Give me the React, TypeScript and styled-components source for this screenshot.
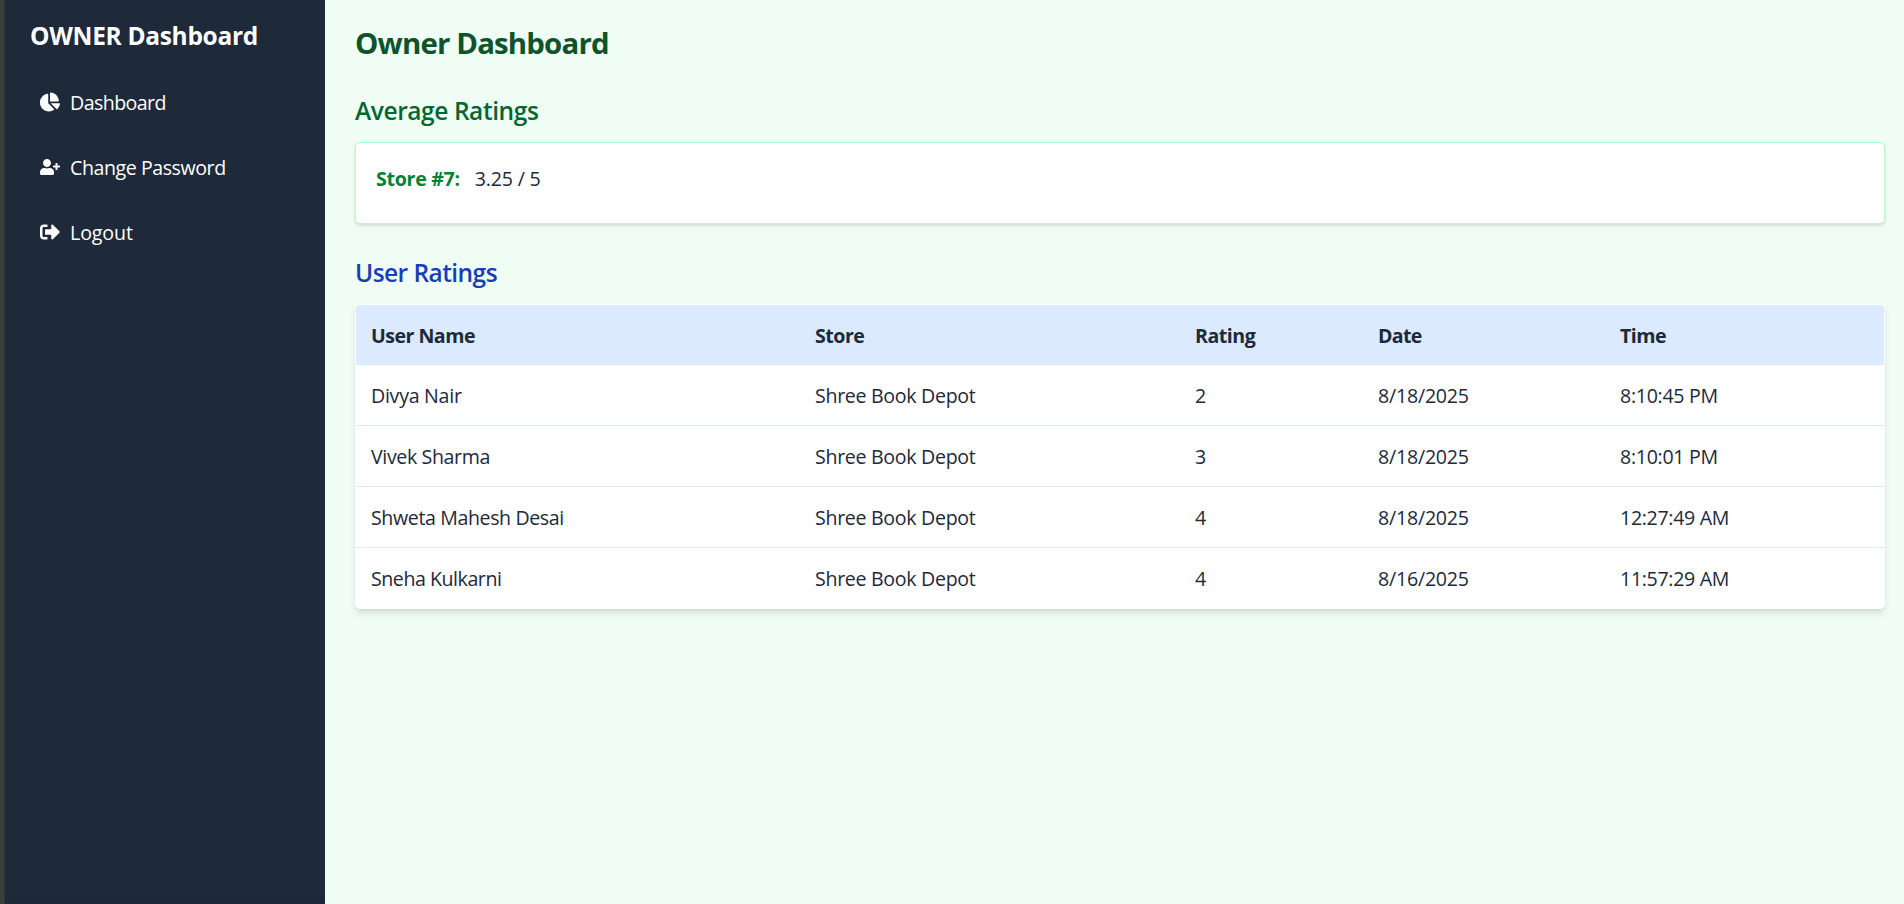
import React from 'react';
import styled, { createGlobalStyle } from 'styled-components';
import { FaChartPie, FaUserPlus, FaSignOutAlt } from 'react-icons/fa';

const GlobalStyle = createGlobalStyle`
  *, *::before, *::after { box-sizing: border-box; }
  body {
    margin: 0;
    background: #f0fdf4;
    color: #1e2939;
    font-family: "Segoe UI", "Open Sans", "Noto Sans", sans-serif;
    font-size: 19.6px;
    line-height: 31px;
    overflow: hidden;
  }
  h1, h2, p { margin: 0; }
`;

const Layout = styled.div`
  display: flex;
  height: 100vh;
  min-height: 904px;
`;

const Edge = styled.div`
  flex: 0 0 5px;
  background: #3c3c3c;
  border-right: 1px solid #343535;
`;

const Sidebar = styled.aside`
  flex: 0 0 320px;
  padding: 18px 25px 0;
  background: #1e2939;
  color: #fff;
  border-bottom: 1px solid #1b2431;
`;

const Text = styled.span<{ $track?: number }>`
  letter-spacing: ${({ $track = 0 }) => $track}px;
  white-space: nowrap;
`;

const Brand = styled.h2`
  margin-bottom: 24px;
  font-size: 24.5px;
  font-weight: 700;
  line-height: 35px;
`;

const Nav = styled.nav`
  display: flex;
  flex-direction: column;
  gap: 15px;
`;

const NavItem = styled.a`
  display: flex;
  align-items: center;
  gap: 10px;
  height: 50px;
  padding: 1px 10px 0;
  color: inherit;
  text-decoration: none;

  svg {
    flex: none;
    width: 20px;
    height: 20px;
    margin-top: -1px;
  }
`;

const Main = styled.main`
  flex: 1;
  padding: 23px 19px 0 30px;
`;

const PageTitle = styled.h1`
  margin-bottom: 30px;
  color: #0d542b;
  font-size: 29.4px;
  font-weight: 700;
  line-height: 40px;
`;

const SectionTitle = styled.h2<{ $color: string }>`
  margin-bottom: 14px;
  color: ${({ $color }) => $color};
  font-size: 24.5px;
  font-weight: 600;
  line-height: 35px;
`;

const RatingCard = styled.div`
  height: 82px;
  margin-bottom: 31px;
  padding: 20px;
  background: #fff;
  border: 1px solid #b9f8cf;
  border-radius: 5px;
  box-shadow: 0 1.25px 3.75px rgba(0, 0, 0, 0.1), 0 1.25px 2.5px -1.25px rgba(0, 0, 0, 0.1);
`;

const StoreLabel = styled(Text)`
  margin-right: 15px;
  color: #008236;
  font-weight: 700;
`;

const TableCard = styled.div`
  background: #fff;
  border: 1px solid #fff;
  border-radius: 5px;
  overflow: hidden;
  box-shadow: 0 5px 7.5px -1.25px rgba(0, 0, 0, 0.1), 0 2.5px 5px -2.5px rgba(0, 0, 0, 0.1);
`;

const Table = styled.table`
  width: 100%;
  table-layout: fixed;
  border-spacing: 0;
  text-align: left;
`;

const Col = styled.col<{ $width?: number }>`
  width: ${({ $width }) => ($width ? `${$width}px` : 'auto')};
`;

const HeadCell = styled.th`
  height: 60px;
  padding: 15px 15px 14px;
  background: #dbeafe;
  font-weight: 700;
  vertical-align: top;
`;

const Cell = styled.td`
  height: 61px;
  padding: 15px 15px 14px;
  border-bottom: 1px solid #dbeafe;
  vertical-align: top;

  tr:last-child > & { height: 60px; border-bottom: 0; }
`;

type Label = [text: string, track: number];

const columns: { label: Label; width?: number }[] = [
  { label: ['User Name', -0.53], width: 444 },
  { label: ['Store', -0.5], width: 380 },
  { label: ['Rating', -0.5], width: 183 },
  { label: ['Date', -0.7], width: 242 },
  { label: ['Time', -0.5] },
];

const store: Label = ['Shree Book Depot', -0.31];

const ratings: Label[][] = [
  [['Divya Nair', -0.27], store, ['2', 0], ['8/18/2025', -0.22], ['8:10:45 PM', -0.3]],
  [['Vivek Sharma', -0.37], store, ['3', 0], ['8/18/2025', -0.22], ['8:10:01 PM', -0.3]],
  [['Shweta Mahesh Desai', -0.39], store, ['4', 0], ['8/18/2025', -0.22], ['12:27:49 AM', -0.32]],
  [['Sneha Kulkarni', -0.46], store, ['4', 0], ['8/16/2025', -0.22], ['11:57:29 AM', -0.32]],
];

export default function App() {
  return (
    <>
      <GlobalStyle />
      <Layout>
        <Edge />
        <Sidebar>
          <Brand><Text $track={-0.32}>OWNER Dashboard</Text></Brand>
          <Nav>
            <NavItem><FaChartPie /><Text $track={-0.58}>Dashboard</Text></NavItem>
            <NavItem><FaUserPlus /><Text $track={-0.44}>Change Password</Text></NavItem>
            <NavItem><FaSignOutAlt /><Text $track={-0.1}>Logout</Text></NavItem>
          </Nav>
        </Sidebar>
        <Main>
          <PageTitle><Text $track={-0.83}>Owner Dashboard</Text></PageTitle>

          <SectionTitle $color="#016630"><Text $track={-0.42}>Average Ratings</Text></SectionTitle>
          <RatingCard>
            <p>
              <StoreLabel $track={-0.3}>Store #7:</StoreLabel>
              <Text $track={-0.18}>3.25 / 5</Text>
            </p>
          </RatingCard>

          <SectionTitle $color="#193cb8"><Text $track={-0.55}>User Ratings</Text></SectionTitle>
          <TableCard>
            <Table>
              <colgroup>
                {columns.map(({ label, width }) => <Col key={label[0]} $width={width} />)}
              </colgroup>
              <thead>
                <tr>
                  {columns.map(({ label: [text, track] }) => (
                    <HeadCell key={text}><Text $track={track}>{text}</Text></HeadCell>
                  ))}
                </tr>
              </thead>
              <tbody>
                {ratings.map((row) => (
                  <tr key={row[0][0]}>
                    {row.map(([text, track], i) => (
                      <Cell key={i}><Text $track={track}>{text}</Text></Cell>
                    ))}
                  </tr>
                ))}
              </tbody>
            </Table>
          </TableCard>
        </Main>
      </Layout>
    </>
  );
}
